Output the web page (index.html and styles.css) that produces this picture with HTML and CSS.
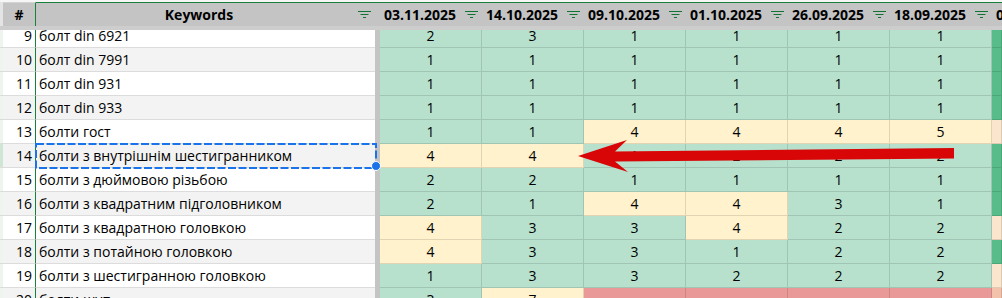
FILE: index.html
```html
<!DOCTYPE html>
<html>
<head>
<meta charset="utf-8">
<link rel="stylesheet" href="styles.css">
</head>
<body>
<div class="sheet">
  <div class="hdr">
    <div class="c"></div>
    <div class="hn">#</div>
    <div class="hk"><span class="ht">Keywords</span><svg class="flt" width="13" height="8" viewBox="0 0 13 8"><path d="M0 0.5H13M2.5 3.5H10.5M5 6.5H8" stroke="#137333" stroke-width="1"/></svg></div>
    <div class="fz"></div>
    <div class="hd"><span class="ht">03.11.2025</span><svg class="flt" width="13" height="8" viewBox="0 0 13 8"><path d="M0 0.5H13M2.5 3.5H10.5M5 6.5H8" stroke="#137333" stroke-width="1"/></svg></div>
    <div class="hd"><span class="ht">14.10.2025</span><svg class="flt" width="13" height="8" viewBox="0 0 13 8"><path d="M0 0.5H13M2.5 3.5H10.5M5 6.5H8" stroke="#137333" stroke-width="1"/></svg></div>
    <div class="hd"><span class="ht">09.10.2025</span><svg class="flt" width="13" height="8" viewBox="0 0 13 8"><path d="M0 0.5H13M2.5 3.5H10.5M5 6.5H8" stroke="#137333" stroke-width="1"/></svg></div>
    <div class="hd"><span class="ht">01.10.2025</span><svg class="flt" width="13" height="8" viewBox="0 0 13 8"><path d="M0 0.5H13M2.5 3.5H10.5M5 6.5H8" stroke="#137333" stroke-width="1"/></svg></div>
    <div class="hd"><span class="ht">26.09.2025</span><svg class="flt" width="13" height="8" viewBox="0 0 13 8"><path d="M0 0.5H13M2.5 3.5H10.5M5 6.5H8" stroke="#137333" stroke-width="1"/></svg></div>
    <div class="hd"><span class="ht">18.09.2025</span><svg class="flt" width="13" height="8" viewBox="0 0 13 8"><path d="M0 0.5H13M2.5 3.5H10.5M5 6.5H8" stroke="#137333" stroke-width="1"/></svg></div>
    <div class="hd last"><span class="ht">05.09.2025</span></div>
  </div>
  <div class="band"></div>
  <div class="viewport">
    <div class="rows">
      <div class="r"><div class="c"></div><div class="n">9</div><div class="k">болт din 6921</div><div class="fz"></div><div class="d g">2</div><div class="d g">3</div><div class="d g">1</div><div class="d g">1</div><div class="d g">1</div><div class="d g">1</div><div class="d dg"></div></div>
      <div class="r"><div class="c"></div><div class="n">10</div><div class="k">болт din 7991</div><div class="fz"></div><div class="d g">1</div><div class="d g">1</div><div class="d g">1</div><div class="d g">1</div><div class="d g">1</div><div class="d g">1</div><div class="d dg"></div></div>
      <div class="r"><div class="c"></div><div class="n">11</div><div class="k">болт din 931</div><div class="fz"></div><div class="d g">1</div><div class="d g">1</div><div class="d g">1</div><div class="d g">1</div><div class="d g">1</div><div class="d g">1</div><div class="d dg"></div></div>
      <div class="r"><div class="c"></div><div class="n">12</div><div class="k">болт din 933</div><div class="fz"></div><div class="d g">1</div><div class="d g">1</div><div class="d g">1</div><div class="d g">1</div><div class="d g">1</div><div class="d g">1</div><div class="d dg"></div></div>
      <div class="r"><div class="c"></div><div class="n">13</div><div class="k">болти гост</div><div class="fz"></div><div class="d g">1</div><div class="d g">1</div><div class="d y">4</div><div class="d y">4</div><div class="d y">4</div><div class="d y">5</div><div class="d p"></div></div>
      <div class="r sel"><div class="c"></div><div class="n">14</div><div class="k">болти з внутрішнім шестигранником<svg class="ants" width="342" height="26" viewBox="0 0 342 26"><rect x="1" y="1" width="340" height="24" fill="none" stroke="#1a73e8" stroke-width="2" stroke-dasharray="8 2.5"/></svg><span class="handle"></span></div><div class="fz"></div><div class="d y">4</div><div class="d y">4</div><div class="d g">1</div><div class="d g">2</div><div class="d g">2</div><div class="d g">2</div><div class="d dg"></div></div>
      <div class="r"><div class="c"></div><div class="n">15</div><div class="k">болти з дюймовою різьбою</div><div class="fz"></div><div class="d g">2</div><div class="d g">2</div><div class="d g">1</div><div class="d g">1</div><div class="d g">1</div><div class="d g">1</div><div class="d dg"></div></div>
      <div class="r"><div class="c"></div><div class="n">16</div><div class="k">болти з квадратним підголовником</div><div class="fz"></div><div class="d g">2</div><div class="d g">1</div><div class="d y">4</div><div class="d y">4</div><div class="d g">3</div><div class="d g">1</div><div class="d dg"></div></div>
      <div class="r"><div class="c"></div><div class="n">17</div><div class="k">болти з квадратною головкою</div><div class="fz"></div><div class="d y">4</div><div class="d g">3</div><div class="d g">3</div><div class="d y">4</div><div class="d g">2</div><div class="d g">2</div><div class="d p"></div></div>
      <div class="r"><div class="c"></div><div class="n">18</div><div class="k">болти з потайною головкою</div><div class="fz"></div><div class="d y">4</div><div class="d g">3</div><div class="d g">3</div><div class="d g">1</div><div class="d g">2</div><div class="d g">2</div><div class="d dg"></div></div>
      <div class="r"><div class="c"></div><div class="n">19</div><div class="k">болти з шестигранною головкою</div><div class="fz"></div><div class="d g">1</div><div class="d g">3</div><div class="d g">3</div><div class="d g">2</div><div class="d g">2</div><div class="d g">2</div><div class="d p"></div></div>
      <div class="r"><div class="c"></div><div class="n">20</div><div class="k">болти шуп</div><div class="fz"></div><div class="d g">3</div><div class="d y">7</div><div class="d rd"></div><div class="d rd"></div><div class="d rd"></div><div class="d rd"></div><div class="d s"></div></div>
    </div>
  </div>
  <svg class="arrow" width="1002" height="298" viewBox="0 0 1002 298">
    <path d="M578 156 L627 140 L615 151.5 L954 148 L954 158.5 L615 161.5 L628 172 Z" fill="#d80606"/>
  </svg>
</div>
</body>
</html>
```

FILE: styles.css
```css
html, body {
  margin: 0;
  padding: 0;
  background: #ffffff;
  overflow: hidden;
}

.sheet {
  position: relative;
  width: 1002px;
  height: 298px;
  overflow: hidden;
  font-family: "Open Sans", "Noto Sans", sans-serif;
  font-size: 14px;
  color: #000;
}

.hdr,
.r {
  display: grid;
  grid-template-columns: 3px 33px 339px 5px repeat(6, 102px) 10px;
}

.hdr {
  padding-top: 2px;
  background: #f6f6f6;
  height: 24px;
}

.hdr > div {
  background: #c4c4c4;
  border-top: 1px solid #188038;
  height: 23px;
  font-weight: 700;
  line-height: 23px;
}

.hdr > .c {
  background: #e4e4e4;
  border-top-color: #e4e4e4;
}

.hdr > .hn {
  border-top-color: #d4d4d4;
  border-right: 1px solid #188038;
  text-align: center;
}

.hk,
.hd {
  display: flex;
  align-items: center;
  padding: 0 4px;
}

.hk .ht {
  flex: 1;
  text-align: center;
}

.hd .ht {
  flex: 1;
}

.flt {
  flex: none;
  margin-top: 1px;
}

.hd.last {
  overflow: hidden;
  white-space: nowrap;
}

.band {
  height: 4px;
  background: #cdcdcd;
}

.viewport {
  height: 268px;
  overflow: hidden;
}

.rows {
  margin-top: -6px;
}

.r > div {
  height: 23px;
  line-height: 23px;
  border-bottom: 1px solid #dcdcdc;
  white-space: nowrap;
}

.r .c {
  background: #eef5ef;
}

.r.sel .c {
  background: #cfe6d4;
}

.r .n {
  background: #ffffff;
  border-right: 1px solid #188038;
  text-align: right;
  padding-right: 3px;
}

.r .k {
  background: #ffffff;
  padding-left: 3px;
  position: relative;
}

.r:nth-child(even) .n,
.r:nth-child(even) .k {
  background: #f3f3f3;
}

.r > .fz,
.hdr > .fz {
  background: #c4c4c4;
  border-bottom-color: #c4c4c4;
}

.r .d {
  text-align: center;
  border-right: 1px solid rgba(0, 0, 0, 0.12);
  border-bottom-color: rgba(0, 0, 0, 0.12);
}

.d.g { background: #b7e1cd; }
.d.y { background: #fff2cc; }
.d.rd { background: #ea9999; }
.d.dg { background: #57bb8a; }
.d.p { background: #fce5cd; }
.d.s { background: #f4c2ab; }

.ants {
  position: absolute;
  left: -1px;
  top: -1px;
  z-index: 2;
}

.handle {
  position: absolute;
  right: -6px;
  bottom: -4px;
  width: 8px;
  height: 8px;
  border-radius: 50%;
  background: #1a73e8;
  border: 1px solid #ffffff;
  z-index: 3;
}

.arrow {
  position: absolute;
  left: 0;
  top: 0;
  pointer-events: none;
  z-index: 5;
}
```
